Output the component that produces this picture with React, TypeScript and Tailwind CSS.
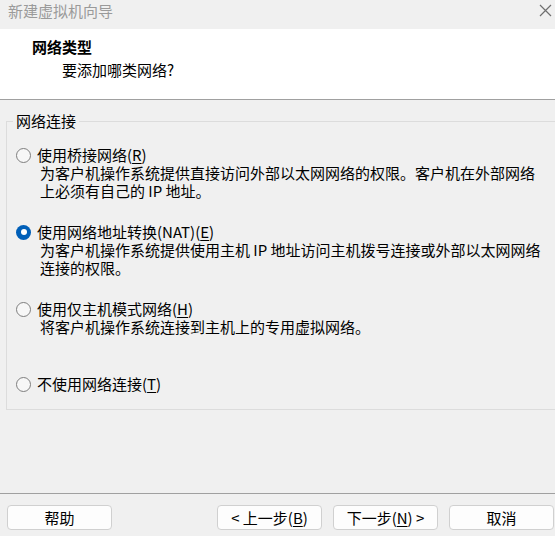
import { ReactNode } from "react";

type Choice = {
  label: ReactNode;
  lines: string[];
  checked?: boolean;
  gap: string;
};

const Key = ({ k }: { k: string }) => <span className="underline underline-offset-2">{k}</span>;

const choices: Choice[] = [
  {
    label: (
      <>
        使用桥接网络(<Key k="R" />)
      </>
    ),
    lines: ["为客户机操作系统提供直接访问外部以太网网络的权限。客户机在外部网络", "上必须有自己的 IP 地址。"],
    gap: "mt-[16px]",
  },
  {
    label: (
      <>
        使用网络地址转换(NAT)(<Key k="E" />)
      </>
    ),
    lines: ["为客户机操作系统提供使用主机 IP 地址访问主机拨号连接或外部以太网网络", "连接的权限。"],
    checked: true,
    gap: "mt-[23px]",
  },
  {
    label: (
      <>
        使用仅主机模式网络(<Key k="H" />)
      </>
    ),
    lines: ["将客户机操作系统连接到主机上的专用虚拟网络。"],
    gap: "mt-[23px]",
  },
  {
    label: (
      <>
        不使用网络连接(<Key k="T" />)
      </>
    ),
    lines: [],
    gap: "mt-[39px]",
  },
];

function Radio({ checked }: { checked?: boolean }) {
  if (checked) {
    return (
      <span className="flex h-[15px] w-[15px] shrink-0 items-center justify-center rounded-full bg-[#005fb8]">
        <span className="h-[6px] w-[6px] rounded-full bg-white" />
      </span>
    );
  }
  return <span className="h-[15px] w-[15px] shrink-0 rounded-full border-[1.5px] border-[#7e7e7e] bg-[#f7f7f7]" />;
}

function Button({ children, className = "" }: { children: ReactNode; className?: string }) {
  return (
    <button className={`flex h-[25px] w-[105px] items-center justify-center rounded-[4px] border border-[#d0d0d0] bg-[#fdfdfd] text-[15px] leading-[18px] text-black ${className}`}>
      {children}
    </button>
  );
}

export default function App() {
  return (
    <div className="flex h-[536px] w-[555px] flex-col overflow-hidden bg-[#f0f0f0] font-['Noto_Sans_CJK_SC','Microsoft_YaHei',sans-serif] text-[15px] leading-[18px] text-black">
      {/* title bar */}
      <div className="flex h-[29px] w-full shrink-0 items-start pl-[8px] pt-[2px]">
        <span className="text-[#9a9a9a]">新建虚拟机向导</span>
        <svg width="13" height="13" viewBox="0 0 13 13" className="ml-auto mr-[3px] mt-[2px] block shrink-0">
          <path d="M1 1 L12 12 M12 1 L1 12" stroke="#6f6f6f" strokeWidth="1.2" fill="none" />
        </svg>
      </div>

      {/* header */}
      <div className="h-[71px] shrink-0 border-b border-[#a0a0a0] bg-white pl-[32px] pt-[9px]">
        <div className="font-bold">网络类型</div>
        <div className="mt-[5px] pl-[30px]">要添加哪类网络?</div>
      </div>

      {/* body */}
      <div className="flex-1 pl-[6px] pt-[12px]">
        <fieldset className="mr-[-20px] border border-[#dcdcdc] pb-[16px] pl-[6px]">
          <legend className="px-[3px]">网络连接</legend>
          {choices.map((c, i) => (
            <div key={i} className={c.gap}>
              <label className="ml-[3px] flex items-center gap-[6px] whitespace-nowrap">
                <Radio checked={c.checked} />
                <span>{c.label}</span>
              </label>
              {c.lines.map((l) => (
                <div key={l} className="whitespace-nowrap pl-[27px]">
                  {l}
                </div>
              ))}
            </div>
          ))}
        </fieldset>
      </div>

      {/* footer */}
      <div className="flex h-[43px] shrink-0 items-start border-t border-[#a0a0a0] pl-[7px] pr-[1px] pt-[11px]">
        <Button>帮助</Button>
        <div className="ml-auto flex gap-[11px]">
          <Button>
            &lt; 上一步(<Key k="B" />)
          </Button>
          <Button>
            下一步(<Key k="N" />) &gt;
          </Button>
          <Button>取消</Button>
        </div>
      </div>
    </div>
  );
}
